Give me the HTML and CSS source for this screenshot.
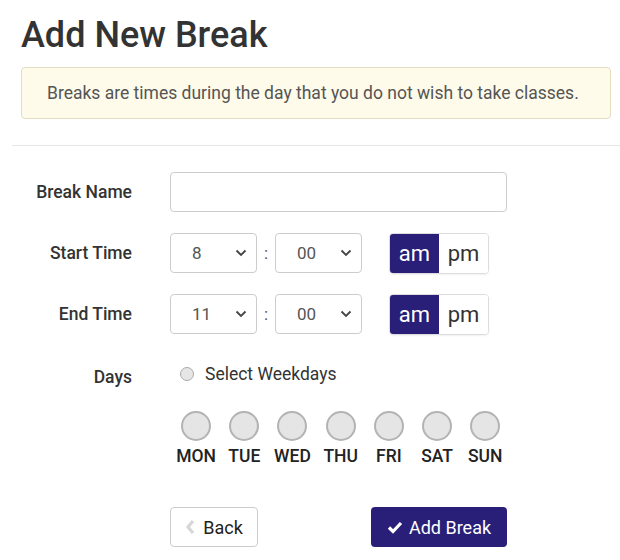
FILE: index.html
```html
<!DOCTYPE html>
<html>
<head>
<meta charset="utf-8">
<link rel="stylesheet" href="styles.css">
</head>
<body>
<div class="page">
  <h1 class="title">Add New Break</h1>
  <div class="notice">Breaks are times during the day that you do not wish to take classes.</div>
  <hr class="rule">
  <form class="form">
    <label class="label">Break Name</label>
    <div class="field"><input class="text-input" type="text"></div>

    <label class="label">Start Time</label>
    <div class="field time-row">
      <div class="select"><span class="select-val">8</span><svg class="chev" viewBox="0 0 12 8"><path d="M1.5 1.5 L6 6 L10.5 1.5" fill="none" stroke="#444" stroke-width="1.8"/></svg></div>
      <span class="colon">:</span>
      <div class="select"><span class="select-val">00</span><svg class="chev" viewBox="0 0 12 8"><path d="M1.5 1.5 L6 6 L10.5 1.5" fill="none" stroke="#444" stroke-width="1.8"/></svg></div>
      <div class="ampm"><span class="seg active">am</span><span class="seg">pm</span></div>
    </div>

    <label class="label">End Time</label>
    <div class="field time-row">
      <div class="select"><span class="select-val">11</span><svg class="chev" viewBox="0 0 12 8"><path d="M1.5 1.5 L6 6 L10.5 1.5" fill="none" stroke="#444" stroke-width="1.8"/></svg></div>
      <span class="colon">:</span>
      <div class="select"><span class="select-val">00</span><svg class="chev" viewBox="0 0 12 8"><path d="M1.5 1.5 L6 6 L10.5 1.5" fill="none" stroke="#444" stroke-width="1.8"/></svg></div>
      <div class="ampm"><span class="seg active">am</span><span class="seg">pm</span></div>
    </div>

    <label class="label label-days">Days</label>
    <div class="field days">
      <div class="weekdays"><span class="radio"></span><span>Select Weekdays</span></div>
      <div class="day-list">
        <div class="day"><span class="circle"></span><span class="day-name">MON</span></div>
        <div class="day"><span class="circle"></span><span class="day-name">TUE</span></div>
        <div class="day"><span class="circle"></span><span class="day-name">WED</span></div>
        <div class="day"><span class="circle"></span><span class="day-name">THU</span></div>
        <div class="day"><span class="circle"></span><span class="day-name">FRI</span></div>
        <div class="day"><span class="circle"></span><span class="day-name">SAT</span></div>
        <div class="day"><span class="circle"></span><span class="day-name">SUN</span></div>
      </div>
    </div>

    <div class="spacer"></div>
    <div class="field actions">
      <button type="button" class="btn btn-back"><svg class="back-ico" viewBox="0 0 10 16"><path d="M8 2 L3 8 L8 14" fill="none" stroke="#d6d6d6" stroke-width="3.2"/></svg>Back</button>
      <button type="button" class="btn btn-add"><svg class="check-ico" viewBox="0 0 16 14"><path d="M2 7.5 L6 11.5 L14 3" fill="none" stroke="#fff" stroke-width="3.2"/></svg>Add Break</button>
    </div>
  </form>
</div>
</body>
</html>
```
FILE: styles.css
```css
* { box-sizing: border-box; }
body {
  margin: 0;
  font-family: Roboto, "Liberation Sans", sans-serif;
  color: #333;
  background: #fff;
}
.page {
  padding: 12px 9px 0 12px;
}
.title {
  margin: 0 0 0 9px;
  font-size: 36px;
  font-weight: 500;
  line-height: 46px;
  color: #333;
}
.notice {
  margin: 9px 0 0 9px;
  height: 52px;
  border: 1px solid #e3dec2;
  border-radius: 4px;
  background: #fefbea;
  color: #555;
  font-size: 17.5px;
  display: flex;
  align-items: center;
  padding-left: 25px;
}
.rule {
  margin: 26px -9px 0 0;
  border: 0;
  border-top: 1px solid #e6e6e6;
}
.form {
  margin-top: 26px;
  display: grid;
  grid-template-columns: 120px 1fr;
  column-gap: 38px;
  row-gap: 21px;
  align-items: center;
}
.label {
  text-align: right;
  font-size: 17.5px;
  font-weight: 500;
  color: #333;
}
.label-days {
  align-self: start;
  margin-top: 12px;
}
.text-input {
  display: block;
  width: 337px;
  height: 40px;
  border: 1px solid #ccc;
  border-radius: 4px;
  margin: 0;
}
.time-row {
  display: flex;
  align-items: center;
  height: 40px;
}
.select {
  width: 87px;
  height: 40px;
  border: 1px solid #ccc;
  border-radius: 4px;
  display: flex;
  align-items: center;
  justify-content: space-between;
  padding: 0 9px 0 21px;
  font-size: 17px;
  color: #555;
}
.chev { width: 12px; height: 8px; }
.colon {
  width: 18px;
  text-align: center;
  font-size: 17px;
  color: #555;
}
.ampm {
  margin-left: 27px;
  display: flex;
  height: 41px;
  border: 1px solid #ddd;
  border-radius: 4px;
  overflow: hidden;
  box-shadow: 0 1px 2px rgba(0,0,0,0.06);
}
.seg {
  width: 49px;
  display: flex;
  align-items: center;
  justify-content: center;
  font-size: 22px;
  color: #333;
  background: #fff;
}
.seg.active {
  background: #291e78;
  color: #fff;
}
.days {
  display: flex;
  flex-direction: column;
}
.weekdays {
  display: flex;
  align-items: center;
  font-size: 17.5px;
  color: #333;
  padding-left: 10px;
  height: 26px;
  margin-top: 6px;
}
.radio {
  width: 14px;
  height: 14px;
  border-radius: 50%;
  border: 1px solid #aaa;
  background: #e6e6e6;
  margin-right: 11px;
}
.day-list {
  display: flex;
  margin-top: 24px;
  margin-left: 2px;
}
.day {
  width: 48.2px;
  display: flex;
  flex-direction: column;
  align-items: center;
}
.circle {
  width: 30px;
  height: 30px;
  border-radius: 50%;
  border: 2px solid #b3b3b3;
  background: #e5e5e5;
}
.day-name {
  margin-top: 5px;
  font-size: 17.5px;
  font-weight: 500;
  color: #222;
}
.spacer { height: 21px; }
.actions {
  display: flex;
  justify-content: space-between;
  width: 337px;
  margin-top: 20px;
}
.btn {
  height: 40px;
  border-radius: 4px;
  font-family: Roboto, "Liberation Sans", sans-serif;
  font-size: 18px;
  display: flex;
  align-items: center;
  justify-content: center;
  cursor: pointer;
}
.btn-back {
  width: 88px;
  background: #fff;
  border: 1px solid #ccc;
  color: #222;
}
.back-ico { width: 10px; height: 16px; margin-right: 8px; }
.btn-add {
  width: 136px;
  background: #291e78;
  border: 0;
  color: #fff;
}
.check-ico { width: 16px; height: 14px; margin-right: 6px; }
```
